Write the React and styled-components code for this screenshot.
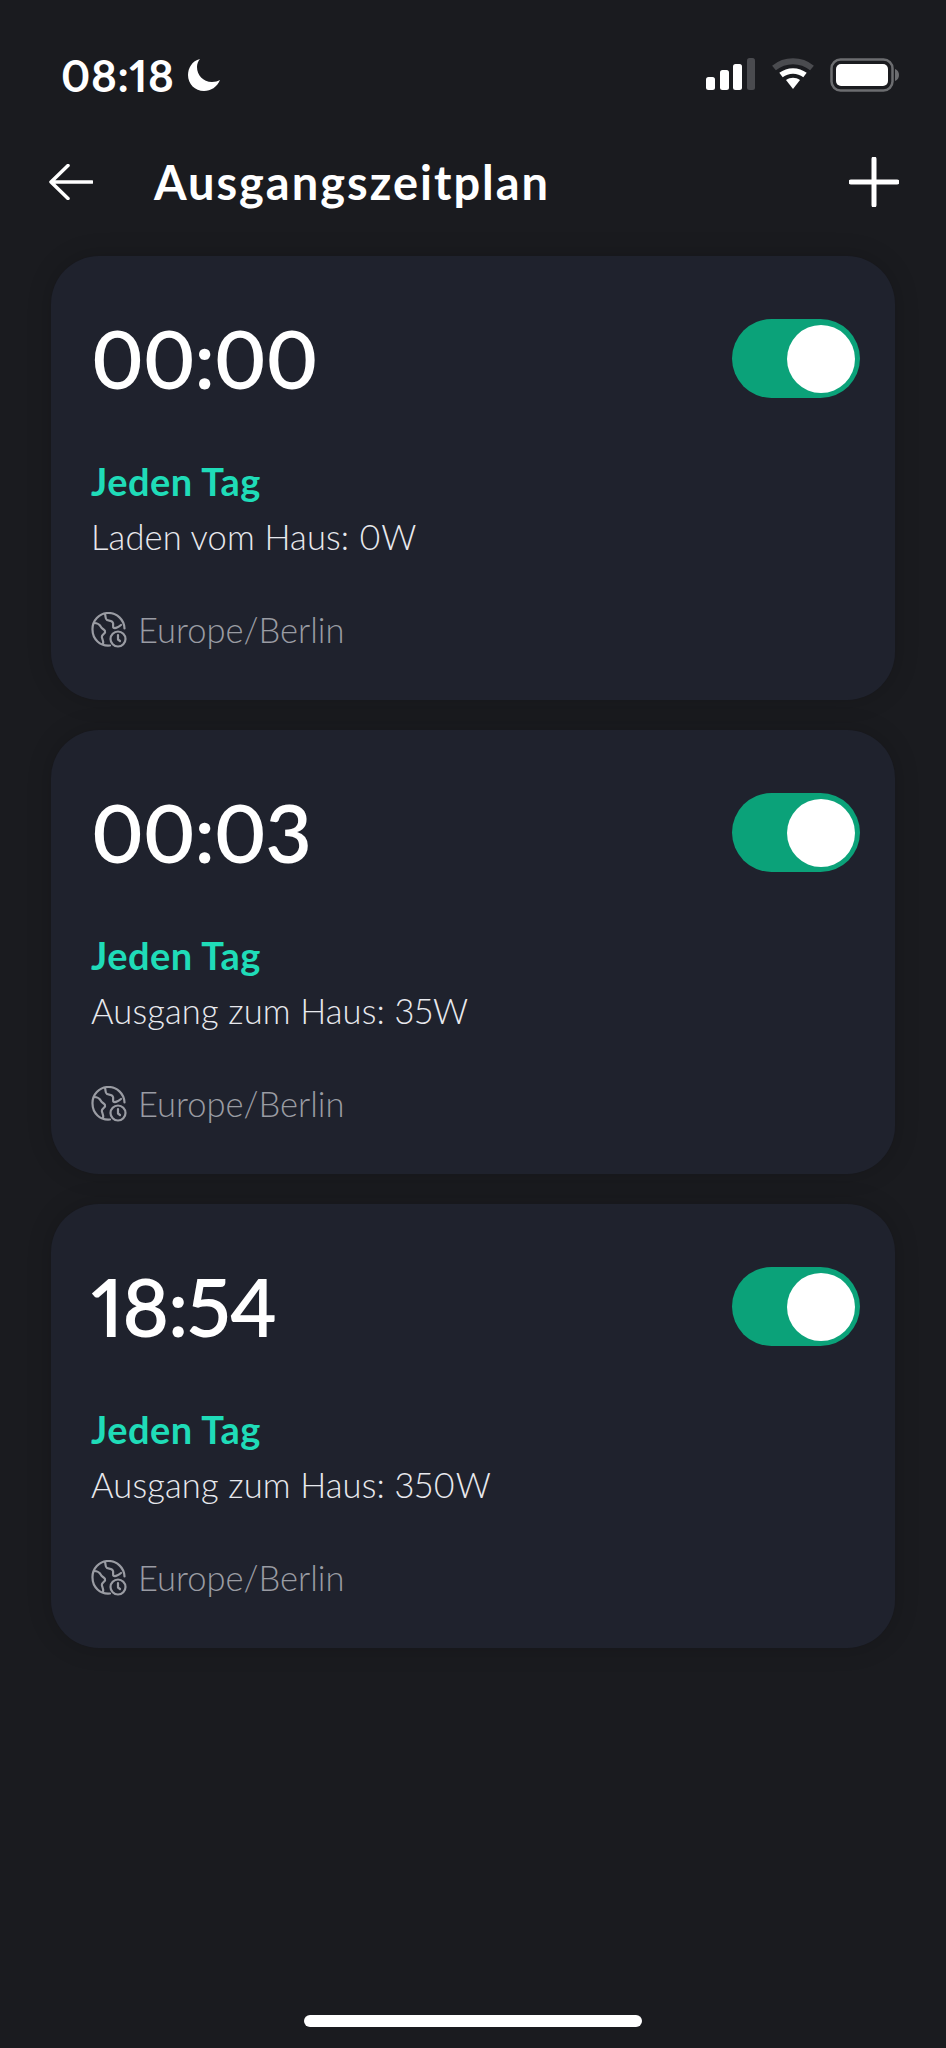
import styled, { createGlobalStyle } from "styled-components";

const GlobalStyle = createGlobalStyle`
  html, body {
    margin: 0;
    background: #1a1b1f;
  }
`;

const Screen = styled.div`
  width: 946px;
  height: 2048px;
  background: #1a1b1f;
  color: #fff;
  font-family: "Lato", "Noto Sans", sans-serif;
  font-variant-numeric: proportional-nums;
  display: flex;
  flex-direction: column;
  overflow: hidden;
`;

const StatusBar = styled.div`
  height: 150px;
  box-sizing: border-box;
  padding: 52px 46px 0 61px;
  display: flex;
  justify-content: space-between;
  align-items: flex-start;
  flex-shrink: 0;
`;

const Clock = styled.div`
  display: flex;
  align-items: center;
  gap: 12px;
  font-size: 44px;
  font-weight: 700;
  letter-spacing: 0.6px;
  line-height: 46px;
`;

const StatusIcons = styled.div`
  display: flex;
  align-items: flex-start;
  gap: 15px;
  padding-top: 6px;
`;

const NavBar = styled.div`
  height: 64px;
  padding: 0 47px 0 49px;
  display: flex;
  align-items: center;
  flex-shrink: 0;
`;

const Title = styled.h1`
  margin: 0 0 0 61px;
  flex: 1;
  font-size: 47px;
  font-weight: 700;
  letter-spacing: 2px;
  line-height: 62px;
`;

const CardList = styled.div`
  margin-top: 42px;
  padding: 0 51px;
  display: flex;
  flex-direction: column;
  gap: 30px;
  flex: 1;
`;

const Card = styled.section`
  height: 444px;
  box-sizing: border-box;
  padding: 63px 35px 0 40px;
  background: #1f222d;
  border-radius: 48px;
  box-shadow: 0 0 24px rgba(0, 0, 0, 0.18);
`;

const CardTop = styled.div`
  display: flex;
  align-items: center;
  justify-content: space-between;
  height: 79px;
`;

const Time = styled.div`
  font-size: 80px;
  font-weight: 600;
  letter-spacing: -1.2px;
  line-height: 79px;
`;

const Toggle = styled.div`
  width: 128px;
  height: 79px;
  border-radius: 40px;
  background: #0ba279;
  display: flex;
  align-items: center;
  justify-content: flex-end;
  padding-right: 5px;
  box-sizing: border-box;
`;

const Knob = styled.div`
  width: 68px;
  height: 68px;
  border-radius: 50%;
  background: #fff;
`;

const Repeat = styled.div`
  margin-top: 61px;
  color: #1fdcb8;
  font-size: 38px;
  font-weight: 700;
  letter-spacing: 0.5px;
  line-height: 44px;
`;

const Action = styled.div`
  margin-top: 13px;
  color: #e8e9ee;
  font-size: 34.5px;
  font-weight: 300;
  letter-spacing: 0.15px;
  line-height: 42px;
`;

const Zone = styled.div`
  margin-top: 51px;
  display: flex;
  align-items: center;
  gap: 11px;
  color: #9a9ca3;
  font-size: 34.5px;
  font-weight: 300;
  line-height: 42px;
`;

const HomeBar = styled.div`
  width: 338px;
  height: 12px;
  margin: 0 auto 21px;
  border-radius: 6px;
  background: #fff;
  flex-shrink: 0;
`;

const MoonIcon = () => (
  <svg width="34" height="34" viewBox="0 0 34 34">
    <path
      d="M13 1C5 3 1 10 1 17c0 9 7 16 16 16 7 0 13-4 16-11-2 1-5 2-8 2-9 0-15-7-15-15 0-3 1-6 3-8z"
      fill="#fff"
    />
  </svg>
);

const SignalIcon = () => (
  <svg width="50" height="32" viewBox="0 0 50 32">
    <rect x="0" y="19" width="9" height="13" rx="2.5" fill="#fff" />
    <rect x="14" y="12" width="9" height="20" rx="2.5" fill="#fff" />
    <rect x="27" y="6" width="9" height="26" rx="2.5" fill="#fff" />
    <rect x="41" y="0" width="8" height="32" rx="2.5" fill="#4a4b4f" />
  </svg>
);

const WifiIcon = () => (
  <svg width="44" height="32" viewBox="0 0 44 32">
    <path d="M3 10C14 1 30 1 41 10" stroke="#4a4b4f" strokeWidth="6" fill="none" />
    <path d="M10 17c7-5.5 17-5.5 24 0" stroke="#fff" strokeWidth="5.5" fill="none" />
    <path d="M15 22c4.5-3 9.5-3 14 0l-7 9z" fill="#fff" />
  </svg>
);

const BatteryIcon = () => (
  <svg width="70" height="34" viewBox="0 0 70 34">
    <rect x="1.5" y="1.5" width="61" height="31" rx="9" fill="none" stroke="#6c6d70" strokeWidth="2.5" />
    <rect x="6" y="6" width="52" height="22" rx="5" fill="#fff" />
    <path d="M65 11c3 1 4 3.5 4 6s-1 5-4 6z" fill="#6c6d70" />
  </svg>
);

const BackIcon = () => (
  <svg width="44" height="36" viewBox="0 0 44 36">
    <path
      d="M43 18H2M19 1.5 2 18l17 16.5"
      stroke="#fff"
      strokeWidth="3.5"
      strokeLinecap="round"
      strokeLinejoin="round"
      fill="none"
    />
  </svg>
);

const PlusIcon = () => (
  <svg width="50" height="50" viewBox="0 0 50 50">
    <path d="M25 2v46M2 25h46" stroke="#fff" strokeWidth="5" strokeLinecap="round" />
  </svg>
);

const GlobeClockIcon = () => (
  <svg width="36" height="36" viewBox="0 0 36 36" fill="none" stroke="#9a9ca3" strokeWidth="2.2" strokeLinecap="round" strokeLinejoin="round">
    <path d="M19 33.5C9 34.5 1.5 27 1.5 17.5a16 16 0 0 1 32-1" />
    <path d="M3 11c4 0 6 2 7 4s3 2 4 4-2 3-3 5 2 4 1 8" />
    <path d="M14 2c1 3 0 5 2 6s5 0 6 3c.7 2-1 4 1 5 2 .5 4-.5 7-3" />
    <circle cx="27" cy="27" r="7.5" />
    <path d="M27 23v4.5l2 1.5" />
  </svg>
);

const schedules = [
  { time: "00:00", action: "Laden vom Haus: 0W" },
  { time: "00:03", action: "Ausgang zum Haus: 35W" },
  { time: "18:54", action: "Ausgang zum Haus: 350W" },
];

const App = () => (
  <Screen>
    <GlobalStyle />
    <StatusBar>
      <Clock>
        08:18
        <MoonIcon />
      </Clock>
      <StatusIcons>
        <SignalIcon />
        <WifiIcon />
        <BatteryIcon />
      </StatusIcons>
    </StatusBar>
    <NavBar>
      <BackIcon />
      <Title>Ausgangszeitplan</Title>
      <PlusIcon />
    </NavBar>
    <CardList>
      {schedules.map((item) => (
        <Card key={item.time}>
          <CardTop>
            <Time>{item.time}</Time>
            <Toggle>
              <Knob />
            </Toggle>
          </CardTop>
          <Repeat>Jeden Tag</Repeat>
          <Action>{item.action}</Action>
          <Zone>
            <GlobeClockIcon />
            Europe/Berlin
          </Zone>
        </Card>
      ))}
    </CardList>
    <HomeBar />
  </Screen>
);

export default App;
